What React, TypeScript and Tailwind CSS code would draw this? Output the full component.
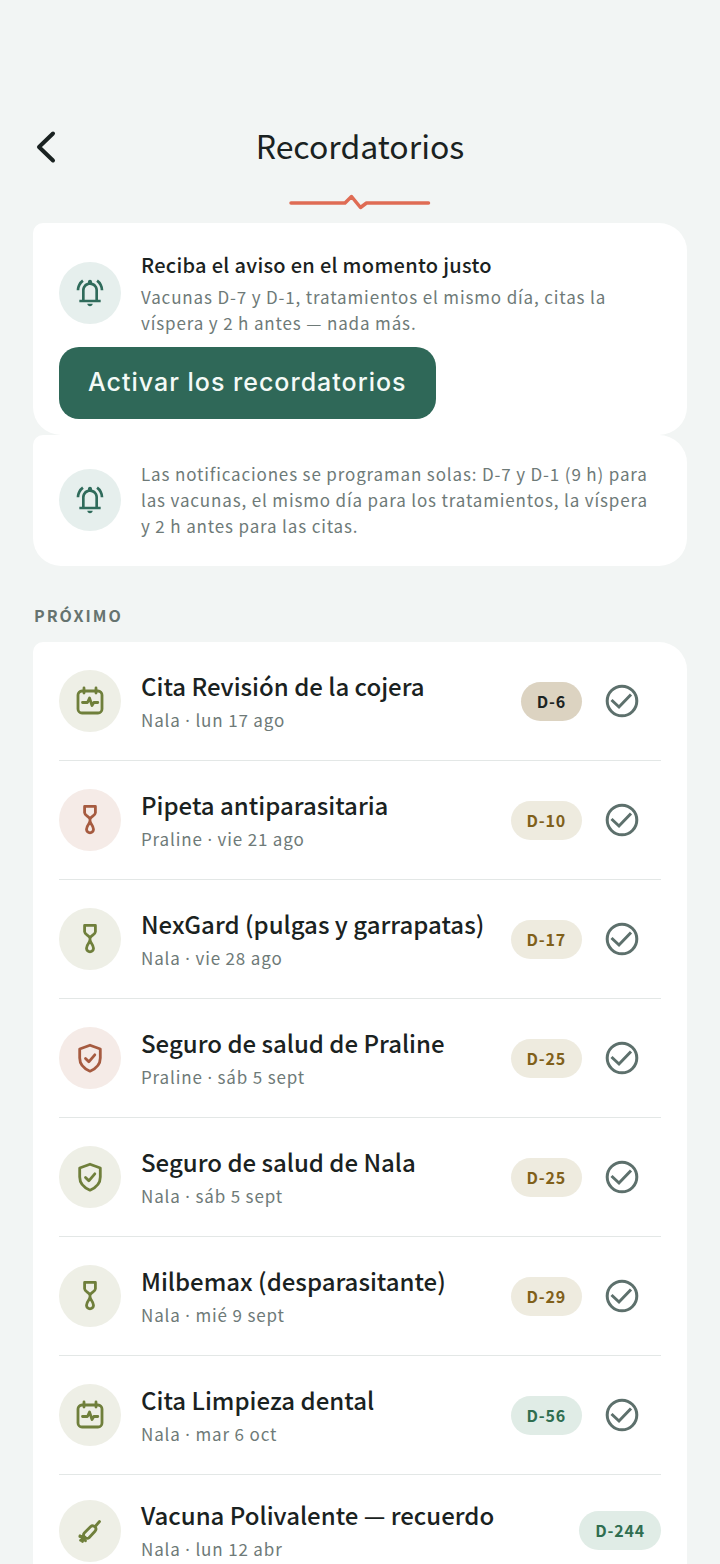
import type { ReactNode } from 'react';
import { clsx } from 'clsx';

type IconName = 'calendar' | 'pipette' | 'shield' | 'syringe';

interface Reminder {
  title: string;
  pet: 'Nala' | 'Praline';
  date: string;
  due: string;
  icon: IconName;
  level: 'urgent' | 'soon' | 'later';
  canComplete: boolean;
}

const REMINDERS: Reminder[] = [
  { title: 'Cita Revisión de la cojera', pet: 'Nala', date: 'lun 17 ago', due: 'D-6', icon: 'calendar', level: 'urgent', canComplete: true },
  { title: 'Pipeta antiparasitaria', pet: 'Praline', date: 'vie 21 ago', due: 'D-10', icon: 'pipette', level: 'soon', canComplete: true },
  { title: 'NexGard (pulgas y garrapatas)', pet: 'Nala', date: 'vie 28 ago', due: 'D-17', icon: 'pipette', level: 'soon', canComplete: true },
  { title: 'Seguro de salud de Praline', pet: 'Praline', date: 'sáb 5 sept', due: 'D-25', icon: 'shield', level: 'soon', canComplete: true },
  { title: 'Seguro de salud de Nala', pet: 'Nala', date: 'sáb 5 sept', due: 'D-25', icon: 'shield', level: 'soon', canComplete: true },
  { title: 'Milbemax (desparasitante)', pet: 'Nala', date: 'mié 9 sept', due: 'D-29', icon: 'pipette', level: 'soon', canComplete: true },
  { title: 'Cita Limpieza dental', pet: 'Nala', date: 'mar 6 oct', due: 'D-56', icon: 'calendar', level: 'later', canComplete: true },
  { title: 'Vacuna Polivalente — recuerdo', pet: 'Nala', date: 'lun 12 abr', due: 'D-244', icon: 'syringe', level: 'later', canComplete: false },
];

const PET_COLORS = {
  Nala: 'bg-[#eeefe6] text-[#6f7f3b]',
  Praline: 'bg-[#f5ebe7] text-[#a65b40]',
};

const LEVEL_COLORS = {
  urgent: 'bg-[#dcd3c1] text-[#1c2423]',
  soon: 'bg-[#eeebdf] text-[#80601a]',
  later: 'bg-[#e0ece6] text-[#2f6e50]',
};

function ReminderIcon({ name }: { name: IconName }) {
  return (
    <svg
      viewBox="0 0 32 32"
      className="size-8"
      fill="none"
      stroke="currentColor"
      strokeWidth="2.8"
      strokeLinecap="round"
      strokeLinejoin="round"
      aria-hidden="true"
    >
      {name === 'calendar' && (
        <>
          <rect x="4" y="6" width="24" height="22" rx="4" />
          <path d="M10 3v5M22 3v5M8.500 17.500h5l2-4.500 2.500 7.500 1.800-3h4" />
        </>
      )}
      {name === 'pipette' && (
        <>
          <path d="M10.600 2.400h10.800v6.400c0 2.600-4.400 3.600-5.400 6.200-1-2.600-5.400-3.600-5.400-6.200zM16 15v3" />
          <path d="M16 18c-1.500 2.400-3.500 4.600-3.500 7.300a3.500 3.500 0 0 0 7 0c0-2.700-2-4.900-3.500-7.300z" />
        </>
      )}
      {name === 'shield' && (
        <>
          <path d="M16 3.200 26.300 7v9c0 6.200-4.200 10.600-10.300 13.200C9.900 26.600 5.700 22.200 5.700 16V7z" />
          <path d="m11.500 16.500 3.300 3.300 6-7" />
        </>
      )}
      {name === 'syringe' && (
        <>
          <path d="m25.500 6.500-4.300 5M10.500 17.800l6-6.100c2.800-2.600 7.300 1.400 4.500 4.500l-6 6.500c-2.700 2.600-7.300-2-4.500-4.900z" />
          <path d="m11 22.300-4.500 3M6 20.800l5.500 5M5.800 21.500h4M8.500 24v2.500" />
        </>
      )}
    </svg>
  );
}

function BellIcon() {
  return (
    <svg viewBox="0 0 24 24" className="size-8" fill="currentColor" aria-hidden="true">
      <path d="M4 19v-2h2v-7c0-1.380.420-2.610 1.250-3.690C8.080 5.240 9.170 4.530 10.500 4.200v-.7c0-.42.150-.77.440-1.060.29-.29.640-.44 1.060-.44s.770.150 1.060.440c.290.290.440.640.440 1.060v.7c1.330.330 2.420 1.040 3.250 2.110C17.580 7.390 18 8.620 18 10v7h2v2H4zm8 3c-.55 0-1.020-.2-1.410-.59A1.900 1.900 0 0 1 10 20h4c0 .55-.2 1.020-.59 1.410-.39.390-.86.590-1.410.590zm-4-5h8v-7c0-1.100-.390-2.040-1.180-2.830A3.850 3.850 0 0 0 12 6c-1.100 0-2.040.390-2.830 1.170A3.850 3.850 0 0 0 8 10v7zm-6-7c0-1.670.370-3.200 1.110-4.600A9.600 9.600 0 0 1 6.100 1.950l1.180 1.600A7.900 7.900 0 0 0 4.900 6.370 7.600 7.600 0 0 0 4 10H2zm18 0a7.700 7.700 0 0 0-.89-3.630 7.900 7.900 0 0 0-2.390-2.820l1.180-1.600A9.600 9.600 0 0 1 20.890 5.400 9.700 9.700 0 0 1 22 10h-2z" />
    </svg>
  );
}

function IconCircle({ className, children }: { className: string; children: ReactNode }) {
  return (
    <div className={clsx('flex size-[62px] shrink-0 items-center justify-center rounded-full', className)}>
      {children}
    </div>
  );
}

function Card({ className, children }: { className?: string; children: ReactNode }) {
  return (
    <section className={clsx('rounded-[28px] rounded-tl-[10px] bg-white px-[26px]', className)}>
      {children}
    </section>
  );
}

function ReminderRow({ item }: { item: Reminder }) {
  return (
    <li className="flex items-center border-b border-[#e3e7e6] py-[22px] last:border-b-0">
      <IconCircle className={PET_COLORS[item.pet]}>
        <ReminderIcon name={item.icon} />
      </IconCircle>
      <div className="ml-5 min-w-0 flex-1">
        <h3 className="text-[24px] leading-[36px] font-medium whitespace-nowrap text-[#1a2221]">{item.title}</h3>
        <p className="mt-0.5 text-[17px] leading-[28px] tracking-wider text-[#6e7a78]">
          {item.pet} <span className="font-['Noto_Sans',sans-serif]">·</span> {item.date}
        </p>
      </div>
      <span
        className={clsx(
          'rounded-full px-4 text-[16px] leading-[39px] font-bold tracking-wider whitespace-nowrap',
          LEVEL_COLORS[item.level],
        )}
      >
        {item.due}
      </span>
      {item.canComplete && (
        <button
          type="button"
          aria-label={`Marcar como hecho: ${item.title}`}
          className="flex h-[74px] w-[79px] items-center justify-center text-[#5d706c]"
        >
          <svg viewBox="0 0 34 34" className="size-[34px]" fill="none" stroke="currentColor" strokeWidth="3" aria-hidden="true">
            <circle cx="17" cy="17" r="14.800" />
            <path d="m6.500 16 7.500 7 12-12.500" />
          </svg>
        </button>
      )}
    </li>
  );
}

export default function App() {
  return (
    <main className="min-h-screen bg-[#f2f5f4] px-[33px] pt-[110px] font-['Noto_Sans_CJK_SC','Noto_Sans',sans-serif]">
      <header className="grid h-[74px] grid-cols-[48px_1fr_48px] items-center">
        <button type="button" aria-label="Volver" className="flex size-12 items-center text-[#1a2221]">
          <svg
            viewBox="0 0 24 36"
            className="h-9 w-6"
            fill="none"
            stroke="currentColor"
            strokeWidth="4"
            strokeLinecap="round"
            strokeLinejoin="round"
            aria-hidden="true"
          >
            <path d="M20 4.500 6 18l14 13.500" />
          </svg>
        </button>
        <h1 className="pb-1 text-center text-[32px] leading-[48px] font-normal text-[#1a2221]">Recordatorios</h1>
      </header>

      {/* Heartbeat accent under the title */}
      <svg
        viewBox="0 0 142 20"
        className="mx-auto mt-2 mb-[11px] h-5 w-[142px]"
        fill="none"
        stroke="#df6c54"
        strokeWidth="3.500"
        strokeLinecap="round"
        strokeLinejoin="round"
        aria-hidden="true"
      >
        <path d="M2 11h54l6.500-6.500 9 11 6-4.500h62" />
      </svg>

      <Card className="pt-[27px] pb-4">
        <div className="flex items-center gap-5">
          <IconCircle className="bg-[#e6efed] text-[#2f6b5b]">
            <BellIcon />
          </IconCircle>
          <div className="min-w-0 flex-1">
            <h2 className="mb-1 text-[20px] leading-[30px] font-medium tracking-[0.015em] text-[#1a2221]">
              Reciba el aviso en el momento justo
            </h2>
            <p className="text-[17px] leading-[26px] tracking-wider text-[#6e7a78]">
              Vacunas D-7 y D-1, tratamientos el mismo día, citas la víspera y 2 h antes — nada más.
            </p>
          </div>
        </div>
        <button
          type="button"
          className="mt-[11px] h-[72px] rounded-[20px] bg-[#2f6858] px-[29px] font-[Inter,sans-serif] text-[25px] font-medium tracking-[1px] text-[#f4faf7]"
        >
          Activar los recordatorios
        </button>
      </Card>

      <Card className="flex items-center gap-5 pt-[26px] pb-[27px]">
        <IconCircle className="bg-[#e6efed] text-[#2f6b5b]">
          <BellIcon />
        </IconCircle>
        <p className="min-w-0 flex-1 text-[17px] leading-[26px] tracking-wider text-[#6e7a78]">
          Las notificaciones se programan solas: D-7 y D-1 (9 h) para las vacunas, el mismo día para los tratamientos, la
          víspera y 2 h antes para las citas.
        </p>
      </Card>

      <h2 className="mt-[35px] mb-[13px] pl-px text-[16px] leading-[28px] font-bold tracking-[2px] text-[#66736f]">
        PRÓXIMO
      </h2>

      <Card className="rounded-b-none">
        <ul>
          {REMINDERS.map((item) => (
            <ReminderRow key={item.title} item={item} />
          ))}
        </ul>
      </Card>
    </main>
  );
}
